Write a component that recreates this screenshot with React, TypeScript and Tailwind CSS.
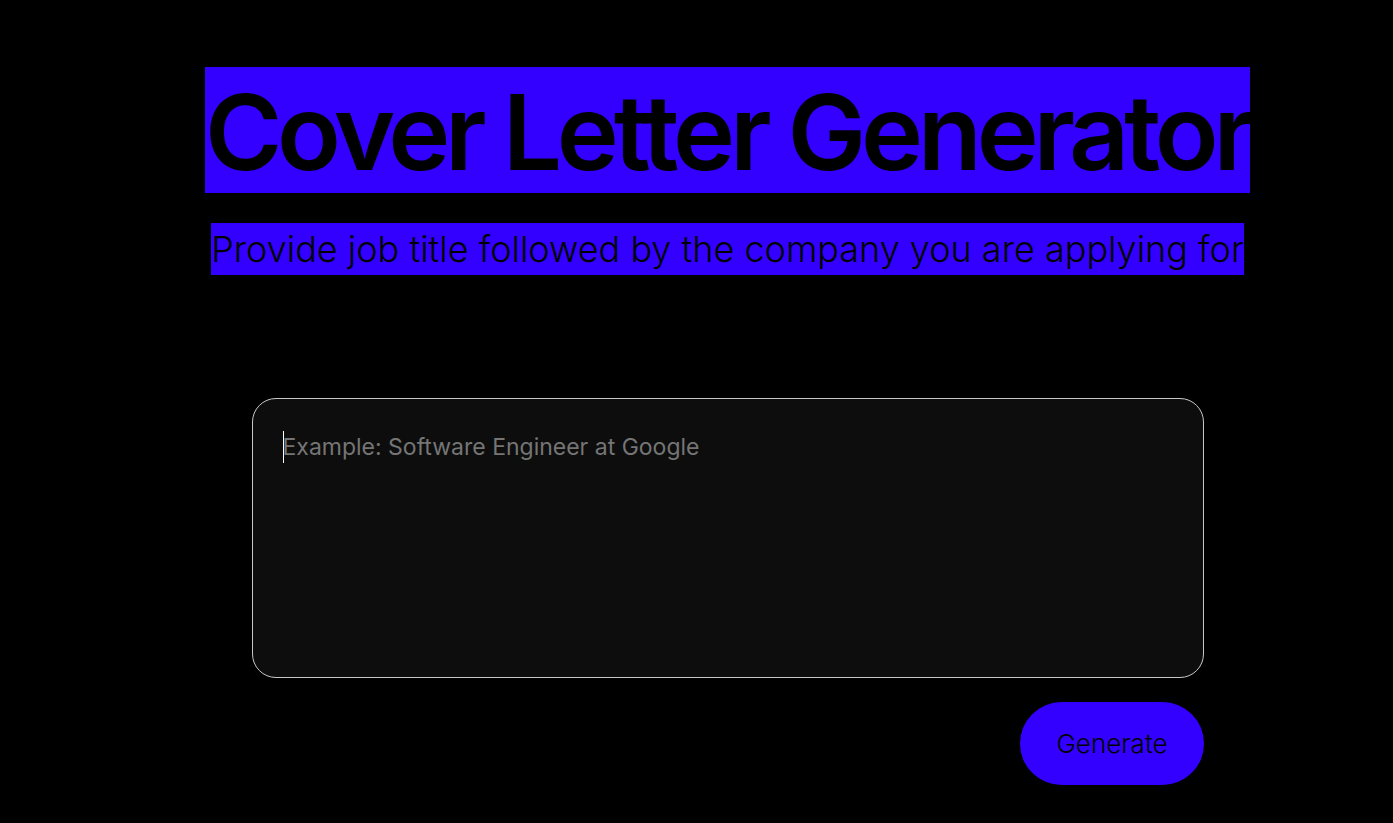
export default function App() {
  return (
    <main className="flex min-h-screen flex-col items-center bg-black pt-[67px] pl-[62px] font-['Inter',sans-serif]">
      <h1 className="bg-[#3300ff] pt-1 text-[105px] leading-[122px] font-semibold tracking-tighter whitespace-nowrap text-black">
        Cover Letter Generator
      </h1>
      <p className="mt-[30px] bg-[#3300ff] text-4xl leading-[52px] font-light whitespace-nowrap text-black">
        Provide job title followed by the company you are applying for
      </p>
      <form className="mt-[123px] flex w-full max-w-[952px] flex-col items-end gap-6" onSubmit={(e) => e.preventDefault()}>
        <div className="relative w-full">
          <textarea
            aria-label="Job title and company"
            placeholder="Example: Software Engineer at Google"
            className="peer block h-[280px] w-full resize-none rounded-3xl border border-[#c8c8c8] bg-[#0d0d0d] px-[30px] py-8 text-[23px] leading-8 text-white outline-none placeholder:text-[#757575] placeholder-shown:caret-transparent"
          />
          <span
            aria-hidden="true"
            className="pointer-events-none absolute top-[33px] left-[31px] hidden h-8 w-px bg-white peer-placeholder-shown:block"
          />
        </div>
        <button type="submit" className="rounded-full bg-[#3300ff] px-9 py-6 text-[26px] leading-[35px] font-light text-black">
          Generate
        </button>
      </form>
    </main>
  );
}
